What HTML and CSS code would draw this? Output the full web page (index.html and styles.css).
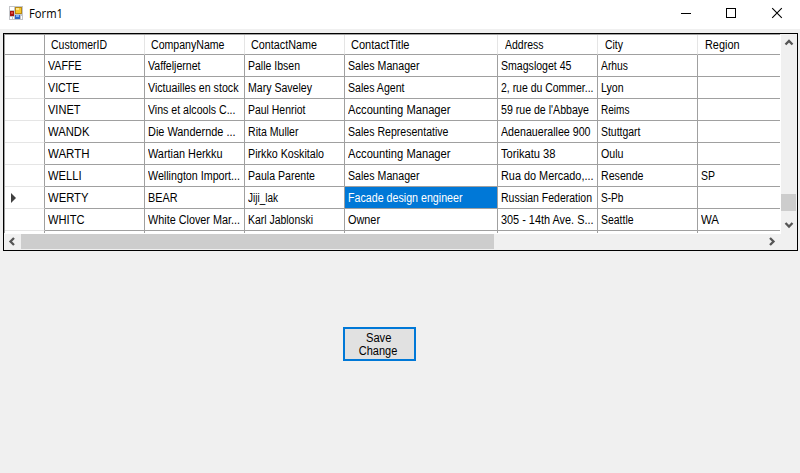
FILE: index.html
```
<!DOCTYPE html>
<html lang="en">
<head>
<meta charset="utf-8">
<title>Form1</title>
<link rel="stylesheet" href="styles.css">
</head>
<body>
<header class="titlebar">
  <svg class="app-icon" width="14" height="14" viewBox="0 0 14 14" shape-rendering="crispEdges">
    <path fill="#c3c5c9" d="M0 0h14v14H0z"/>
    <path fill="#fff" d="M1 1h4v3H1zM1 11h2v2H1zM4 11h1v2H4zM12 10h1v3h-1z"/>
    <path fill="#a51410" d="M1 5h4v5H1z"/><path fill="#e0483c" d="M2 6h2v2H2z"/>
    <path fill="#b98a12" d="M6 1h7v7H6z"/><path fill="#f6c62c" d="M7 2h5v5H7z"/><path fill="#ffe68a" d="M7 2h3v2H7z"/>
    <path fill="#2e66c4" d="M6 9h5v4H6z"/><path fill="#7fb0f4" d="M7 9h3v2H7z"/>
  </svg>
  <span class="title"><b data-w="34">Form1</b></span>
  <svg class="controls" width="104" height="12" viewBox="0 0 104 12">
    <path d="M0 6.500h10M45.500 1.500h9v9h-9z" fill="none" stroke="#000" shape-rendering="crispEdges"/>
    <path d="M91.200 1.200l9.600 9.600M100.800 1.200l-9.600 9.600" fill="none" stroke="#000" stroke-width="1.100"/>
  </svg>
</header>
<main>
  <section class="datagrid">
    <div class="view">
      <div class="row head"><span></span><span><b data-w="56">CustomerID</b></span><span><b data-w="73.500">CompanyName</b></span><span><b data-w="66">ContactName</b></span><span><b data-w="58.500">ContactTitle</b></span><span><b data-w="38.500">Address</b></span><span><b data-w="18">City</b></span><span><b data-w="34.500">Region</b></span></div>
      <div class="row"><span></span><span><b data-w="33.500">VAFFE</b></span><span><b data-w="52.500">Vaffeljernet</b></span><span><b data-w="52">Palle Ibsen</b></span><span><b data-w="71.500">Sales Manager</b></span><span><b data-w="70.500">Smagsloget 45</b></span><span><b data-w="27">Arhus</b></span><span></span></div>
      <div class="row"><span></span><span><b data-w="31.500">VICTE</b></span><span><b data-w="90.500">Victuailles en stock</b></span><span><b data-w="64">Mary Saveley</b></span><span><b data-w="56.500">Sales Agent</b></span><span><b data-w="92.500">2, rue du Commer...</b></span><span><b data-w="22.500">Lyon</b></span><span></span></div>
      <div class="row"><span></span><span><b data-w="32.500">VINET</b></span><span><b data-w="87.500">Vins et alcools C...</b></span><span><b data-w="57.500">Paul Henriot</b></span><span><b data-w="102.500">Accounting Manager</b></span><span><b data-w="88">59 rue de l'Abbaye</b></span><span><b data-w="28.500">Reims</b></span><span></span></div>
      <div class="row"><span></span><span><b data-w="41.500">WANDK</b></span><span><b data-w="87.500">Die Wandernde ...</b></span><span><b data-w="50.500">Rita Muller</b></span><span><b data-w="100.500">Sales Representative</b></span><span><b data-w="89.500">Adenauerallee 900</b></span><span><b data-w="39.500">Stuttgart</b></span><span></span></div>
      <div class="row"><span></span><span><b data-w="41.500">WARTH</b></span><span><b data-w="74.500">Wartian Herkku</b></span><span><b data-w="76">Pirkko Koskitalo</b></span><span><b data-w="102.500">Accounting Manager</b></span><span><b data-w="54.500">Torikatu 38</b></span><span><b data-w="22.500">Oulu</b></span><span></span></div>
      <div class="row"><span></span><span><b data-w="33.500">WELLI</b></span><span><b data-w="92">Wellington Import...</b></span><span><b data-w="67">Paula Parente</b></span><span><b data-w="71.500">Sales Manager</b></span><span><b data-w="92.500">Rua do Mercado,...</b></span><span><b data-w="42.500">Resende</b></span><span><b data-w="14">SP</b></span></div>
      <div class="row"><span><svg class="marker" width="5" height="10" viewBox="0 0 5 10"><path d="M0 0l5 5-5 5z" fill="#404040"/></svg></span><span><b data-w="40.500">WERTY</b></span><span><b data-w="29.500">BEAR</b></span><span><b data-w="30">Jiji_lak</b></span><span class="selected"><b data-w="114.500">Facade design engineer</b></span><span><b data-w="91">Russian Federation</b></span><span><b data-w="22.500">S-Pb</b></span><span></span></div>
      <div class="row"><span></span><span><b data-w="36.500">WHITC</b></span><span><b data-w="92">White Clover Mar...</b></span><span><b data-w="65">Karl Jablonski</b></span><span><b data-w="32">Owner</b></span><span><b data-w="92.500">305 - 14th Ave. S...</b></span><span><b data-w="32.500">Seattle</b></span><span><b data-w="18">WA</b></span></div>
      <div class="row"><span></span><span></span><span></span><span></span><span></span><span></span><span></span><span></span></div>
    </div>
    <div class="vscroll">
      <svg width="16" height="17" viewBox="0 0 16 17"><path d="M4.500 10.500L8 7l3.500 3.500" class="arrow"/></svg>
      <div class="vthumb"></div>
      <svg width="16" height="17" viewBox="0 0 16 17"><path d="M4.500 6L8 9.500 11.500 6" class="arrow"/></svg>
    </div>
    <div class="hscroll">
      <svg width="17" height="16" viewBox="0 0 17 16"><path d="M10 4L6.500 7.500 10 11" class="arrow"/></svg>
      <div class="hthumb"></div>
      <svg width="16" height="16" viewBox="0 0 16 16"><path d="M5 4l3.500 3.500L5 11" class="arrow"/></svg>
    </div>
  </section>
  <button class="save"><b data-w="25.500">Save</b><br><b data-w="38.500">Change</b></button>
</main>
<script src="fit.js"></script>
</body>
</html>
```
FILE: styles.css
```
* { box-sizing: border-box; }
body {
  margin: 0;
  height: 473px;
  overflow: hidden;
  background: #f0f0f0;
  color: #000;
  font: 12px/14px "Liberation Sans", Arial, sans-serif;
}
b { display: inline-block; font-weight: normal; white-space: nowrap; transform-origin: 0 0; }
.titlebar {
  display: flex;
  align-items: center;
  height: 29px;
  padding: 0 15px 3px 9px;
  background: #fff;
}
.title { margin-left: 6px; font: 12px/16px "Open Sans", "Noto Sans", sans-serif; padding-top: 1px; }
.controls { margin-left: auto; }
main { display: flex; flex-direction: column; padding: 4px 2px 0 3px; }
.datagrid {
  display: grid;
  grid-template: 200px 16px / 777px 16px;
  width: 795px;
  height: 218px;
  border: 1px solid #000;
  background: #f0f0f0;
}
.view {
  height: 199px;
  width: 776px;
  overflow: hidden;
  border: solid #a0a0a0;
  border-width: 1px 0 0 1px;
  background: #fff;
  box-shadow: 1px 1px #fff;
}
.row {
  display: grid;
  grid-template-columns: 40px 100px 100px 100px 153px 100px 100px 100px;
  height: 22px;
}
.row span {
  height: 22px;
  padding: 4px 0 0 3px;
  border: solid #a0a0a0;
  border-width: 0 1px 1px 0;
  white-space: nowrap;
}
.row span:first-child { padding: 6px 0 0 6px; border-bottom-color: #e5e5e5; line-height: 0; }
.row.head { height: 20px; }
.row.head span { height: 20px; padding: 3px 0 0 6px; border-right-color: #e5e5e5; }
.row.head span:nth-child(n+6) { padding-left: 7px; }
.row.head span:first-child { border-color: #a0a0a0; }
.row .selected { background: #0078d7; color: #fff; }
.vscroll, .hscroll { display: flex; justify-content: space-between; background: #f0f0f0; }
.vscroll { flex-direction: column; }
.vthumb { height: 17px; width: 15px; background: #cdcdcd; margin: 143px 0 auto; }
.hscroll { width: 777px; }
.hthumb { width: 473px; height: 15px; margin-right: auto; background: #cdcdcd; }
.arrow { fill: none; stroke: #555; stroke-width: 2.300; }
.save {
  width: 73px;
  height: 34px;
  margin: 76px 0 0 340px;
  padding: 2px 2px 0 0;
  border: 2px solid #0078d7;
  background: #e1e1e1;
  color: #000;
  font: 12px/13px "Liberation Sans", Arial, sans-serif;
}
.save b { transform-origin: 50% 0; vertical-align: top; }
```
FILE: fit.js
```
// Condense each label to the column-text width given in data-w.
document.querySelectorAll('b[data-w]').forEach(function (label) {
  var natural = label.getBoundingClientRect().width;
  label.style.transform = 'scaleX(' + (label.dataset.w / natural) + ')';
});
```
